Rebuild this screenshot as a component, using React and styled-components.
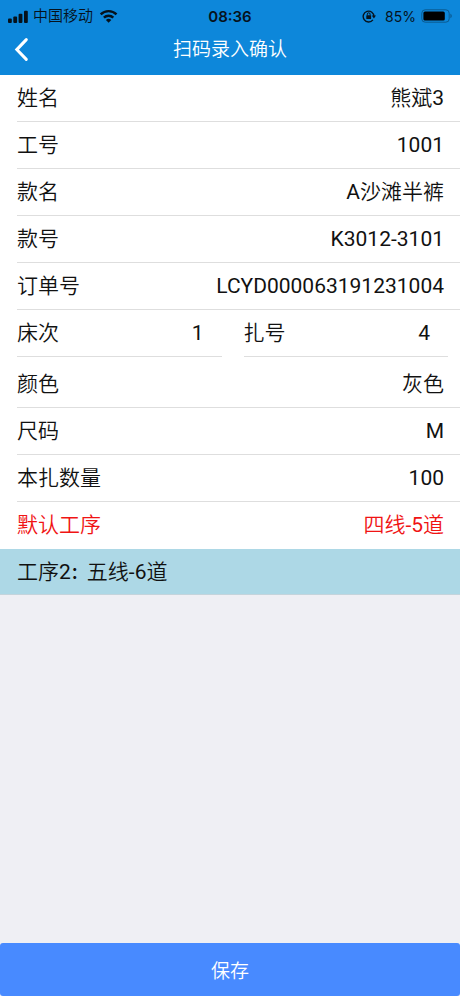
import styled, { createGlobalStyle } from "styled-components";

const GlobalStyle = createGlobalStyle`
  * {
    box-sizing: border-box;
  }
  body {
    margin: 0;
    background-color: #efeff4;
    color: #111;
    font-family: Roboto, "Noto Sans CJK SC DemiLight", "Noto Sans CJK SC", sans-serif;
  }
`;

const Page = styled.div`
  min-height: 100vh;
  display: flex;
  flex-direction: column;
`;

const Header = styled.header`
  background-color: #0d87da;
`;

const StatusBar = styled.div`
  display: grid;
  grid-template-columns: 1fr auto 1fr;
  align-items: center;
  height: 32px;
  padding: 0 8px;
  color: #06121c;
  font-family: Inter, "Noto Sans CJK SC DemiLight", "Noto Sans CJK SC", sans-serif;
  font-size: 14px;
`;

const StatusGroup = styled.div`
  display: flex;
  align-items: center;
  justify-content: ${(props) => (props.$end ? "flex-end" : "flex-start")};
  gap: 5px;
`;

const Carrier = styled.span`
  font-size: 15px;
  line-height: 22px;
`;

const Time = styled.span`
  font-size: 15px;
  font-weight: 600;
`;

const LockIcon = styled.svg`
  margin-right: 4px;
`;

const NavBar = styled.div`
  display: grid;
  grid-template-columns: 1fr auto 1fr;
  align-items: center;
  height: 43px;
  padding: 0 14px 8px;
  color: white;
`;

const BackBtn = styled.button`
  justify-self: start;
  display: flex;
  padding: 0;
  border: none;
  background: none;
  color: inherit;
`;

const Title = styled.h1`
  margin: 0;
  font-size: 19px;
  font-weight: 400;
  line-height: 24px;
`;

const Main = styled.main`
  flex: 1;
`;

const List = styled.dl`
  margin: 0;
  background-color: white;
  font-size: 21px;
  line-height: 30px;
`;

const Row = styled.div`
  padding-left: 17px;
  color: ${(props) => (props.$red ? "#f01414" : "inherit")};
`;

const RowInner = styled.div`
  display: flex;
  justify-content: space-between;
  align-items: center;
  height: 47px;
  padding-right: ${(props) => (props.$half ? "18px" : "16px")};
  border-bottom: 1px solid ${(props) => (props.$last ? "transparent" : "#dedede")};
`;

const SplitRow = styled.div`
  display: grid;
  grid-template-columns: 1fr 1fr;
  gap: 5px;
  padding: 0 12px 4px 0;
`;

const Label = styled.dt``;

const Value = styled.dd`
  margin: 0;
`;

const Process = styled.div`
  display: flex;
  align-items: center;
  height: 46px;
  padding: 0 17px;
  border-bottom: 1px solid #c4d4dc;
  background-color: #add8e6;
  font-size: 21px;
  line-height: 30px;
`;

const Colon = styled.span`
  font-family: "Noto Sans CJK SC", sans-serif;
  font-size: 16px;
  font-weight: 700;
`;

const Footer = styled.footer`
  position: sticky;
  bottom: 0;
`;

const SaveBtn = styled.button`
  display: block;
  width: 100%;
  height: 53px;
  border: none;
  border-radius: 3px;
  background-color: #488aff;
  color: white;
  font-family: inherit;
  font-size: 19px;
`;

const before = [
  { label: "姓名", value: "熊斌3" },
  { label: "工号", value: "1001" },
  { label: "款名", value: "A沙滩半裤" },
  { label: "款号", value: "K3012-3101" },
  { label: "订单号", value: "LCYD000063191231004" },
];

const split = [
  { label: "床次", value: "1" },
  { label: "扎号", value: "4" },
];

const after = [
  { label: "颜色", value: "灰色" },
  { label: "尺码", value: "M" },
  { label: "本扎数量", value: "100" },
  { label: "默认工序", value: "四线-5道", red: true, last: true },
];

function Item({ label, value, red, last, half }) {
  return (
    <Row $red={red}>
      <RowInner $half={half} $last={last}>
        <Label>{label}</Label>
        <Value>{value}</Value>
      </RowInner>
    </Row>
  );
}

export default function App() {
  return (
    <Page>
      <GlobalStyle />
      <Header>
        <StatusBar>
          <StatusGroup>
            <svg width="20" height="13" viewBox="0 0 20 13" fill="currentColor" aria-hidden="true">
              <rect x="0" y="8.5" width="3.8" height="4.5" rx="1" />
              <rect x="5.3" y="6.5" width="3.8" height="6.5" rx="1" />
              <rect x="10.6" y="3.8" width="3.8" height="9.2" rx="1" />
              <rect x="16" y="0.8" width="3.8" height="12.2" rx="1" />
            </svg>
            <Carrier>中国移动</Carrier>
            <svg width="22" height="14" viewBox="2 0 22 14" aria-hidden="true">
              <g fill="none" stroke="currentColor" strokeWidth="2.4">
                <path d="M4.7 5.4a11.2 11.2 0 0 1 15.8 0" />
                <path d="M7.9 8.7a6.6 6.6 0 0 1 9.4 0" />
              </g>
              <path d="M12.6 13.8 9.9 11a3.9 3.9 0 0 1 5.4 0z" fill="currentColor" />
            </svg>
          </StatusGroup>
          <Time>08:36</Time>
          <StatusGroup $end>
            <LockIcon width="14" height="14" viewBox="0 0 14 14" aria-hidden="true">
              <path
                d="M10.9 10.8A5.4 5.4 0 1 1 12 7.6"
                fill="none"
                stroke="currentColor"
                strokeWidth="1.4"
              />
              <path d="M9.8 6.6h4.2L11.9 9.4z" fill="currentColor" />
              <rect x="4.3" y="6.3" width="4.8" height="3.6" rx="0.5" fill="currentColor" />
              <path
                d="M5.3 6.4V5.2a1.4 1.4 0 0 1 2.8 0v1.2"
                fill="none"
                stroke="currentColor"
                strokeWidth="1"
              />
            </LockIcon>
            <span>85%</span>
            <svg width="31" height="14" viewBox="0 0 31 14" aria-hidden="true">
              <rect
                x="0.8"
                y="0.8"
                width="27.4"
                height="12.4"
                rx="3.4"
                fill="none"
                stroke="#0b5a90"
                strokeWidth="1"
              />
              <rect x="2.4" y="2.4" width="21.4" height="9.2" rx="1.6" fill="#000" />
              <path d="M29.4 4.8c1.8.7 1.8 3.7 0 4.4z" fill="#0b5a90" />
            </svg>
          </StatusGroup>
        </StatusBar>
        <NavBar>
          <BackBtn type="button" aria-label="返回">
            <svg width="16" height="34" viewBox="0 0 16 34" aria-hidden="true">
              <path
                d="M12.3 6.6 2.8 16.6l9.5 9.8"
                fill="none"
                stroke="currentColor"
                strokeWidth="3"
                strokeLinecap="round"
              />
            </svg>
          </BackBtn>
          <Title>扫码录入确认</Title>
        </NavBar>
      </Header>
      <Main>
        <List>
          {before.map((item) => (
            <Item key={item.label} {...item} />
          ))}
          <SplitRow>
            {split.map((item) => (
              <Item key={item.label} {...item} half />
            ))}
          </SplitRow>
          {after.map((item) => (
            <Item key={item.label} {...item} />
          ))}
        </List>
        <Process>
          工序2<Colon>：</Colon>五线-6道
        </Process>
      </Main>
      <Footer>
        <SaveBtn type="button">保存</SaveBtn>
      </Footer>
    </Page>
  );
}
